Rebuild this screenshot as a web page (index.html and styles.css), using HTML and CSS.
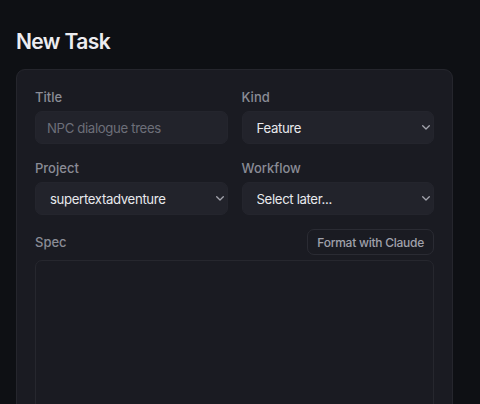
FILE: index.html
```html
<!DOCTYPE html>
<html lang="en">
<head>
<meta charset="utf-8">
<title>New Task</title>
<link rel="stylesheet" href="styles.css">
</head>
<body>
<main class="page">
  <h1 class="page-title">New Task</h1>
  <form class="card">
    <div class="grid">
      <div class="field">
        <label class="label" for="title">Title</label>
        <input class="control" id="title" type="text" placeholder="NPC dialogue trees">
      </div>
      <div class="field">
        <label class="label" for="kind">Kind</label>
        <div class="select-wrap">
          <select class="control select" id="kind"><option>Feature</option></select>
          <svg class="chevron" width="8" height="5" viewBox="0 0 8 5"><path d="M0.7 0.7 L4 4 L7.3 0.7" fill="none" stroke="currentColor" stroke-width="1.3" stroke-linecap="round" stroke-linejoin="round"/></svg>
        </div>
      </div>
      <div class="field">
        <label class="label" for="project">Project</label>
        <div class="select-wrap">
          <select class="control select" id="project"><option>supertextadventure</option></select>
          <svg class="chevron" width="8" height="5" viewBox="0 0 8 5"><path d="M0.7 0.7 L4 4 L7.3 0.7" fill="none" stroke="currentColor" stroke-width="1.3" stroke-linecap="round" stroke-linejoin="round"/></svg>
        </div>
      </div>
      <div class="field">
        <label class="label" for="workflow">Workflow</label>
        <div class="select-wrap">
          <select class="control select" id="workflow"><option>Select later...</option></select>
          <svg class="chevron" width="8" height="5" viewBox="0 0 8 5"><path d="M0.7 0.7 L4 4 L7.3 0.7" fill="none" stroke="currentColor" stroke-width="1.3" stroke-linecap="round" stroke-linejoin="round"/></svg>
        </div>
      </div>
    </div>
    <div class="spec">
      <div class="spec-head">
        <label class="label" for="spec">Spec</label>
        <button class="ghost-btn" type="button">Format with Claude</button>
      </div>
      <textarea class="textarea" id="spec"></textarea>
    </div>
  </form>
</main>
</body>
</html>
```
FILE: styles.css
```css
* { box-sizing: border-box; }
html, body { margin: 0; padding: 0; background: #0e1014; }
body {
  font-family: Inter, "Noto Sans", "DejaVu Sans", sans-serif;
  color: #e6e7eb;
  overflow: hidden;
  height: 404px;
}
.page { padding: 0 16px; }
.page-title {
  margin: 0;
  padding-top: 28px;
  font-size: 21px;
  line-height: 28px;
  font-weight: 600;
  color: #ececf0;
  letter-spacing: -0.6px;
}
.card {
  margin-top: 13px;
  width: 437px;
  height: 400px;
  background: #1a1b22;
  border: 1px solid #25262d;
  border-radius: 9px;
  padding: 18px;
}
.grid {
  display: grid;
  grid-template-columns: 1fr 1fr;
  column-gap: 14px;
  row-gap: 15px;
}
.field { display: flex; flex-direction: column; }
.label {
  font-size: 13px;
  line-height: 18px;
  font-weight: 500;
  color: #8a8c96;
  margin-bottom: 5px;
}
.control {
  height: 33px;
  width: 100%;
  background: #22232b;
  border: 1px solid #24252d;
  border-radius: 7px;
  color: #e8e9ed;
  font-family: inherit;
  font-size: 13.2px;
  letter-spacing: -0.35px;
  padding: 0 11px;
  outline: none;
}
.control::placeholder { color: #6d6f79; }
.select-wrap { position: relative; }
.select {
  appearance: none;
  -webkit-appearance: none;
  padding: 0 14px;
  display: block;
}
.chevron {
  position: absolute;
  right: 4px;
  top: 14px;
  color: #a3a4ad;
  pointer-events: none;
}
.spec { margin-top: 14px; }
.spec-head {
  display: flex;
  align-items: center;
  justify-content: space-between;
  height: 26px;
}
.spec-head .label { margin-bottom: 0; }
.ghost-btn {
  height: 26px;
  padding: 0 9px;
  background: #1a1b22;
  border: 1px solid #2a2b33;
  border-radius: 7px;
  color: #a0a1ab;
  font-family: inherit;
  font-size: 12px;
  font-weight: 500;
  letter-spacing: -0.25px;
}
.textarea {
  display: block;
  margin-top: 5px;
  width: 100%;
  height: 200px;
  background: #1a1b22;
  border: 1px solid #26272e;
  border-radius: 7px;
  resize: none;
  outline: none;
}
```
